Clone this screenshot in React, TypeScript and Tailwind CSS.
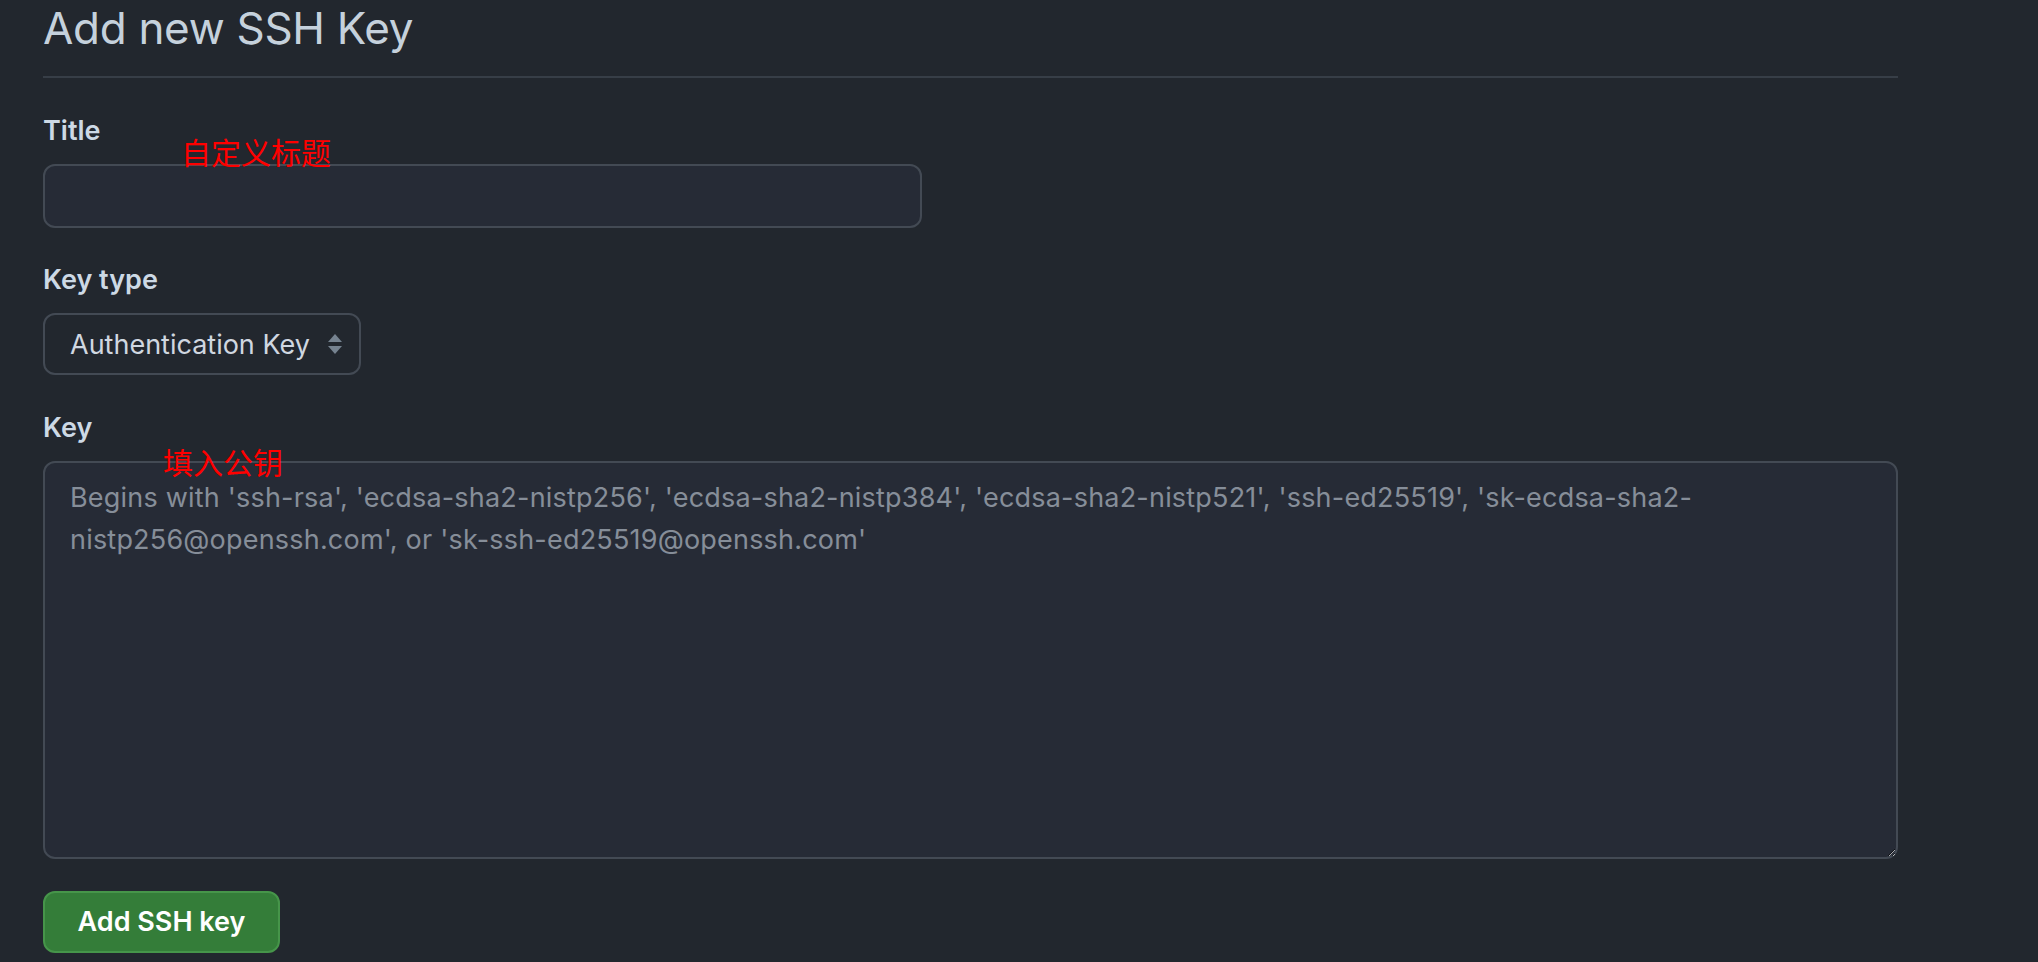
import { useState } from "react";

function SelectArrows() {
  return (
    <svg width="16" height="22" viewBox="0 0 16 22" className="shrink-0">
      <path d="M8 1 L15 9 L1 9 Z" fill="#768390" />
      <path d="M8 21 L15 13 L1 13 Z" fill="#768390" />
    </svg>
  );
}

function Note({ text, className }: { text: string; className: string }) {
  return (
    <span
      className={`absolute text-[30px] leading-[30px] text-[#ff0000] font-['Noto_Sans_CJK_SC','Noto_Sans',sans-serif] whitespace-nowrap ${className}`}
    >
      {text}
    </span>
  );
}

export default function App() {
  const [title, setTitle] = useState("");
  const [key, setKey] = useState("");

  return (
    <div className="min-h-screen bg-[#22272e] font-['Inter','Noto_Sans_CJK_SC',sans-serif] text-[#cdd9e5]">
      <div className="pl-[43px] w-[1898px]">
        <div className="pb-[20px] border-b-2 border-[#373e47]">
          <h2 className="text-[44px] leading-[56px] font-normal text-[#c5d1dc] tracking-[-0.3px]">
            Add new SSH Key
          </h2>
        </div>

        {/* Title */}
        <div className="relative mt-[35px]">
          <label className="block text-[27px] leading-[36px] font-semibold text-[#cdd9e5]">Title</label>
          <Note text="自定义标题" className="left-[138px] top-[23px]" />
          <input
            value={title}
            onChange={(e) => setTitle(e.target.value)}
            className="mt-[15px] block w-[879px] h-[64px] rounded-[12px] border-2 border-[#434a54] bg-[#262b36] px-[25px] text-[27px] text-[#cdd9e5] outline-none"
          />
        </div>

        {/* Key type */}
        <div className="mt-[34px]">
          <label className="block text-[27px] leading-[36px] font-semibold text-[#cdd9e5]">Key type</label>
          <div className="mt-[15px] flex items-center justify-between w-[318px] h-[62px] rounded-[12px] border-2 border-[#434a54] bg-[#22272e] pl-[25px] pr-[16px]">
            <span className="text-[27px] leading-none text-[#d0d7e0]">Authentication Key</span>
            <SelectArrows />
          </div>
        </div>

        {/* Key */}
        <div className="relative mt-[35px]">
          <label className="block text-[27px] leading-[36px] font-semibold text-[#cdd9e5]">Key</label>
          <Note text="填入公钥" className="left-[120px] top-[36px]" />
          <textarea
            value={key}
            onChange={(e) => setKey(e.target.value)}
            placeholder="Begins with 'ssh-rsa', 'ecdsa-sha2-nistp256', 'ecdsa-sha2-nistp384', 'ecdsa-sha2-nistp521', 'ssh-ed25519', 'sk-ecdsa-sha2-nistp256@openssh.com', or 'sk-ssh-ed25519@openssh.com'"
            className="mt-[15px] block w-[1855px] h-[398px] rounded-[12px] border-2 border-[#434a54] bg-[#262b36] pl-[25px] pr-[25px] pt-[14px] text-[27px] leading-[42px] tracking-[0.2px] text-[#cdd9e5] placeholder:text-[#868e99] outline-none [color-scheme:dark]"
          />
        </div>

        <button className="mt-[32px] w-[237px] h-[62px] rounded-[12px] border-2 border-[#46954a] bg-[#347d39] text-[27px] font-semibold text-white">
          Add SSH key
        </button>
      </div>
    </div>
  );
}
